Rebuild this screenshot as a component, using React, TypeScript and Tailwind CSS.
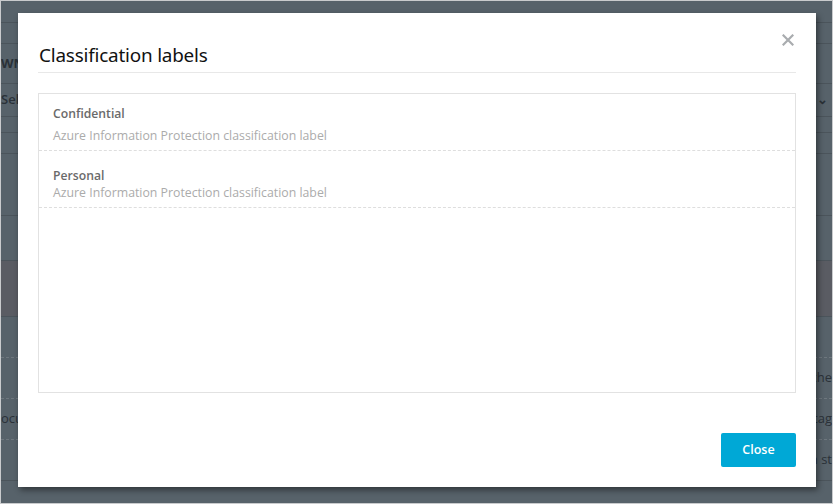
import React from "react";

const font = { fontFamily: '"Open Sans", "Noto Sans", sans-serif' };

function BgRow({ h, border = "solid", dark = false, left, right }: { h: string; border?: "solid" | "dashed" | "none"; dark?: boolean; left?: React.ReactNode; right?: React.ReactNode }) {
  const b = border === "solid" ? "border-b border-[#4b545b]" : border === "dashed" ? "border-b border-dashed border-[#6e777e]" : "";
  return (
    <div className={`${h} ${b} ${dark ? "bg-[#5a5c63]" : ""} flex items-center justify-between text-[13px] font-semibold text-[#2a3138]`}>
      <div className="whitespace-nowrap">{left}</div>
      <div className="whitespace-nowrap">{right}</div>
    </div>
  );
}

export default function App() {
  return (
    <div className="relative w-[833px] h-[504px] overflow-hidden border border-[#c9cbcd] bg-[#57626a]" style={font}>
      {/* background page */}
      <div className="flex flex-col">
        <BgRow h="h-[22px]" />
        <BgRow h="h-[21px]" />
        <BgRow h="h-[40px]" left={<span className="font-bold">WNM</span>} />
        <BgRow h="h-[33px]" left="Sel" right={<span className="pr-[4px] text-[#2a3138]">⌄</span>} />
        <BgRow h="h-[16px]" />
        <BgRow h="h-[21px]" />
        <BgRow h="h-[62px]" />
        <BgRow h="h-[45px]" />
        <BgRow h="h-[56px]" dark />
        <BgRow h="h-[41px]" border="dashed" />
        <BgRow h="h-[41px]" border="dashed" right={<span className="font-normal">Mache</span>} />
        <BgRow h="h-[41px]" border="dashed" left={<span className="font-normal">ocu</span>} right={<span className="font-normal">Stag</span>} />
        <BgRow h="h-[41px]" right={<span className="font-normal">n st</span>} />
      </div>

      {/* modal */}
      <div className="absolute left-[17px] top-[12px] w-[798px] h-[474px] bg-white shadow-[2px_3px_6px_rgba(0,0,0,0.45)] flex flex-col px-[20px]">
        <div className="relative h-[60px] border-b border-[#e8e8e8] flex items-end pb-[5px]">
          <h1 className="pl-[1px] text-[18.9px] leading-[24px] text-[#111] tracking-[-0.2px]" style={{ fontFamily: '"Noto Sans", sans-serif' }}>Classification labels</h1>
          <button className="absolute right-[2px] top-[21px] text-[#a9acaf]">
            <svg width="12" height="12" viewBox="0 0 12 12">
              <path d="M1.5 1.5 L10.5 10.5 M10.5 1.5 L1.5 10.5" stroke="currentColor" strokeWidth="2.2" strokeLinecap="square" />
            </svg>
          </button>
        </div>

        <div className="mt-[20px] h-[300px] border border-[#e2e2e2] flex flex-col">
          <div className="h-[57px] border-b border-dashed border-[#dedede] px-[14px] pt-[10px]">
            <div className="text-[12.2px] font-semibold text-[#6a6a6a] leading-[20px]">Confidential</div>
            <div className="mt-[2px] text-[12.3px] text-[#ababab] leading-[20px]">Azure Information Protection classification label</div>
          </div>
          <div className="h-[57px] border-b border-dashed border-[#dedede] px-[14px] pt-[17px]">
            <div className="text-[12.2px] font-semibold text-[#6a6a6a] leading-[16px]">Personal</div>
            <div className="text-[12.3px] text-[#ababab] leading-[18px]">Azure Information Protection classification label</div>
          </div>
        </div>

        <div className="flex justify-end mt-[40px]">
          <button className="w-[75px] h-[34px] rounded-[2px] bg-[#00a8d6] text-white text-[12.5px] font-semibold">Close</button>
        </div>
      </div>
    </div>
  );
}
